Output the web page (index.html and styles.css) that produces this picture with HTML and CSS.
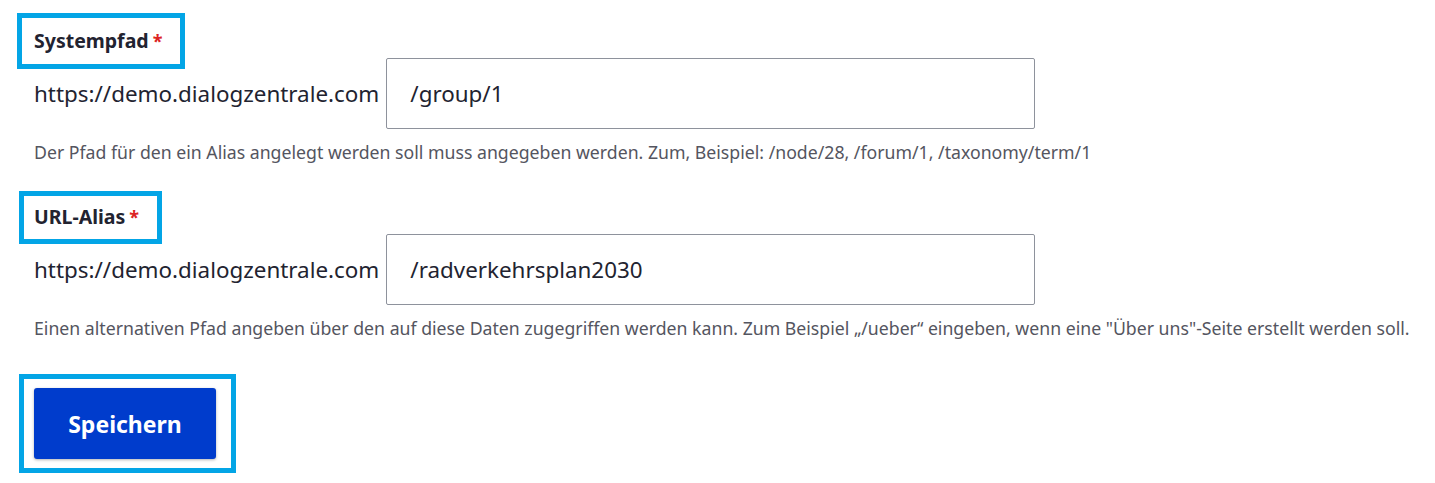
FILE: index.html
```html
<!DOCTYPE html>
<html lang="de">
<head>
<meta charset="utf-8">
<title>URL-Alias</title>
<link rel="stylesheet" href="styles.css">
</head>
<body>
<main class="form">
  <div class="field">
    <div class="label-wrap hl hl-path"><span class="label">Systempfad</span><span class="req">*</span></div>
    <div class="row">
      <span class="prefix">https://demo.dialogzentrale.com</span>
      <input class="text-input" type="text" value="/group/1">
    </div>
    <div class="desc">Der Pfad für den ein Alias angelegt werden soll muss angegeben werden. Zum, Beispiel: /node/28, /forum/1, /taxonomy/term/1</div>
  </div>
  <div class="field field-alias">
    <div class="label-wrap hl hl-alias"><span class="label">URL-Alias</span><span class="req">*</span></div>
    <div class="row">
      <span class="prefix">https://demo.dialogzentrale.com</span>
      <input class="text-input" type="text" value="/radverkehrsplan2030">
    </div>
    <div class="desc">Einen alternativen Pfad angeben über den auf diese Daten zugegriffen werden kann. Zum Beispiel „/ueber“ eingeben, wenn eine "Über uns"-Seite erstellt werden soll.</div>
  </div>
  <div class="actions">
    <button class="btn" type="button">Speichern</button>
  </div>
</main>
</body>
</html>
```
FILE: styles.css
```css
html, body {
  margin: 0;
  padding: 0;
  background: #ffffff;
}
body {
  font-family: "Noto Sans", "Open Sans", sans-serif;
  color: #222330;
}
.form {
  padding: 0 0 0 34px;
}
.field {
  display: flex;
  flex-direction: column;
  align-items: flex-start;
}
.label-wrap {
  position: relative;
  margin-top: 26px;
  height: 28px;
  display: flex;
  align-items: center;
  font-size: 19.5px;
  font-weight: 700;
}
.field-alias .label-wrap {
  margin-top: 38px;
}
.req {
  color: #dc2323;
  margin-left: 4px;
  font-size: 18px;
  font-weight: 700;
  line-height: 1;
  align-self: center;
  margin-top: 2px;
}
.hl::before {
  content: "";
  position: absolute;
  box-sizing: border-box;
  border: 5px solid #03a5e6;
}
.hl-path::before {
  left: -17px;
  top: -13px;
  width: 168px;
  height: 56px;
}
.hl-alias::before {
  left: -15px;
  top: -11px;
  width: 143px;
  height: 53px;
}
.row {
  margin-top: 4px;
  display: flex;
  align-items: center;
  gap: 7px;
}
.prefix {
  font-size: 22.4px;
  color: #222330;
}
.text-input {
  box-sizing: border-box;
  width: 649px;
  height: 71px;
  border: 1px solid #8e929c;
  border-radius: 2px;
  padding: 0 0 0 23px;
  font-family: inherit;
  font-size: 22.4px;
  color: #222330;
  background: #fff;
  outline: none;
}
.desc {
  margin-top: 11px;
  font-size: 17.7px;
  line-height: 24px;
  color: #545560;
}
.actions {
  display: inline-block;
  margin: 34px 0 0 -15px;
  border: 5px solid #03a5e6;
  padding: 9px 15px 9px 10px;
}
.btn {
  display: block;
  width: 182px;
  height: 71px;
  border: 0;
  border-radius: 3px;
  background: #003ccc;
  color: #fff;
  font-family: inherit;
  font-size: 23px;
  font-weight: 700;
  box-shadow: 0 1px 3px rgba(0, 0, 0, 0.3);
}
```
